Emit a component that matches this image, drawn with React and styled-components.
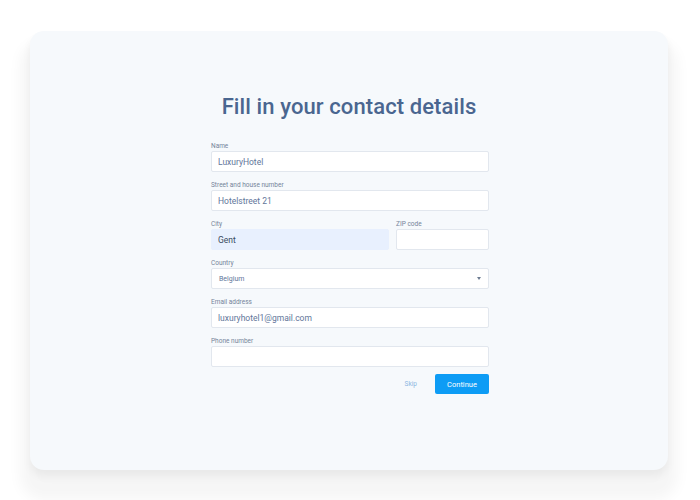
import styled, { createGlobalStyle } from "styled-components";

const GlobalStyle = createGlobalStyle`
  html, body {
    margin: 0;
    padding: 0;
    background: #ffffff;
    font-family: Roboto, "Liberation Sans", sans-serif;
  }
  * {
    box-sizing: border-box;
  }
`;

const Page = styled.div`
  width: 700px;
  height: 500px;
  padding: 31px 32px 30px 30px;
`;

const Card = styled.div`
  height: 439px;
  background: #f6f9fc;
  border-radius: 14px;
  box-shadow: 0 20px 14px 10px rgba(0, 0, 0, 0.04), 0 6px 8px rgba(0, 0, 0, 0.05);
  display: flex;
  flex-direction: column;
  align-items: center;
  padding-top: 60px;
`;

const Title = styled.h1`
  margin: 0 0 18px;
  font-size: 22px;
  line-height: 32px;
  font-weight: 500;
  color: #4a6690;
  letter-spacing: 0.1px;
`;

const Form = styled.form`
  width: 278px;
  margin-left: 2px;
  display: flex;
  flex-direction: column;
`;

const Row = styled.div`
  display: flex;
  gap: 7px;
`;

const Field = styled.div`
  flex: ${(p) => p.$grow || 1};
  display: flex;
  flex-direction: column;
  margin-bottom: 8px;
`;

const Label = styled.label`
  font-size: 6.5px;
  line-height: 10px;
  color: #75849a;
`;

const Input = styled.input`
  height: 21px;
  width: 100%;
  padding: 0 6px;
  border: 1px solid ${(p) => (p.$filled ? "#e8f0fe" : "#e2e7ee")};
  border-radius: 2px;
  background: ${(p) => (p.$filled ? "#e8f0fe" : "#ffffff")};
  font-family: inherit;
  font-size: 8.5px;
  font-weight: 400;
  color: ${(p) => (p.$filled ? "#3a4a60" : "#62769a")};
  outline: none;
`;

const Select = styled.div`
  height: 21px;
  display: flex;
  align-items: center;
  justify-content: space-between;
  padding: 0 7px;
  border: 1px solid #e2e7ee;
  border-radius: 2px;
  background: #ffffff;
  font-size: 7px;
  color: #62769a;
`;

const Caret = styled.span`
  width: 0;
  height: 0;
  border-left: 2.5px solid transparent;
  border-right: 2.5px solid transparent;
  border-top: 3px solid #6c7b91;
`;

const Actions = styled.div`
  display: flex;
  justify-content: flex-end;
  align-items: center;
  gap: 18px;
  margin-top: -1px;
`;

const SkipButton = styled.button`
  border: none;
  background: none;
  padding: 0;
  font-family: inherit;
  font-size: 6.5px;
  color: #8cb6e2;
  cursor: pointer;
`;

const ContinueButton = styled.button`
  width: 54px;
  height: 20px;
  border: none;
  border-radius: 2px;
  background: #0d9cf5;
  color: #ffffff;
  font-family: inherit;
  font-size: 7.5px;
  font-weight: 400;
  cursor: pointer;
`;

export default function App() {
  return (
    <>
      <GlobalStyle />
      <Page>
        <Card>
          <Title>Fill in your contact details</Title>
          <Form onSubmit={(e) => e.preventDefault()}>
            <Field>
              <Label>Name</Label>
              <Input defaultValue="LuxuryHotel" />
            </Field>
            <Field>
              <Label>Street and house number</Label>
              <Input defaultValue="Hotelstreet 21" />
            </Field>
            <Row>
              <Field $grow={178}>
                <Label>City</Label>
                <Input $filled defaultValue="Gent" />
              </Field>
              <Field $grow={93}>
                <Label>ZIP code</Label>
                <Input />
              </Field>
            </Row>
            <Field>
              <Label>Country</Label>
              <Select>
                Belgium
                <Caret />
              </Select>
            </Field>
            <Field>
              <Label>Email address</Label>
              <Input defaultValue="luxuryhotel1@gmail.com" />
            </Field>
            <Field>
              <Label>Phone number</Label>
              <Input />
            </Field>
            <Actions>
              <SkipButton type="button">Skip</SkipButton>
              <ContinueButton type="submit">Continue</ContinueButton>
            </Actions>
          </Form>
        </Card>
      </Page>
    </>
  );
}
